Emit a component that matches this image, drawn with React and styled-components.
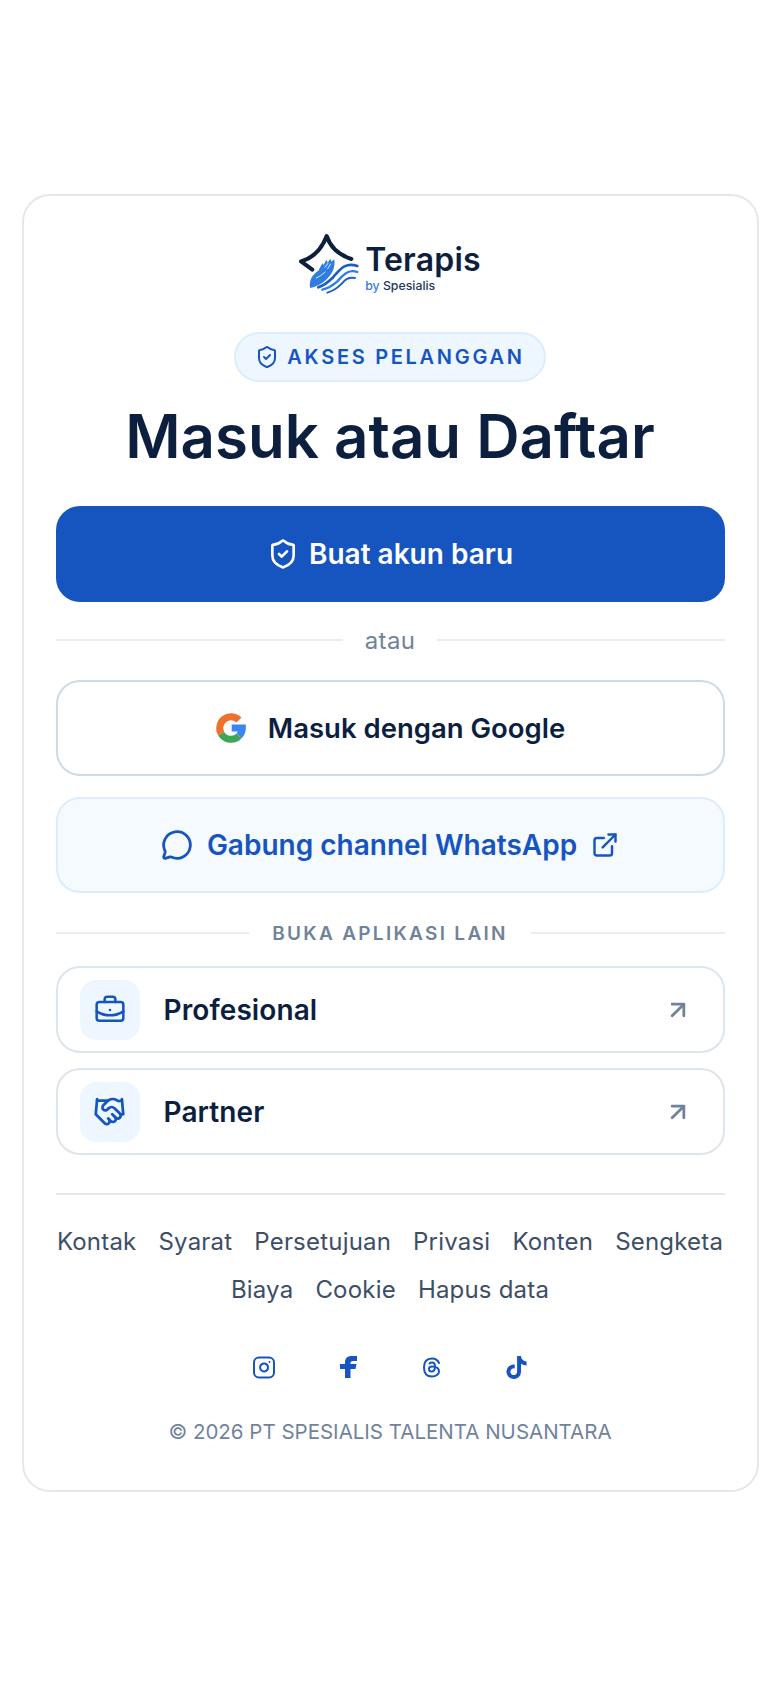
import React from 'react';
import styled, { createGlobalStyle } from 'styled-components';
import {
  ShieldCheck, MessageCircle, ExternalLink, BriefcaseBusiness,
  Handshake, ArrowUpRight, Instagram,
} from 'lucide-react';
import { FaTiktok } from 'react-icons/fa';
import { TbBrandThreads } from 'react-icons/tb';

const Global = createGlobalStyle`
  html, body { margin: 0; padding: 0; background: #fff; }
  body { font-family: Inter, "Open Sans", sans-serif; color: #0d1f3f; }
  a { text-decoration: none; color: inherit; }
`;

const Page = styled.main`
  width: 780px;
  height: 1688px;
  padding-top: 194px;
  display: flex;
  align-items: flex-start;
  justify-content: center;
  box-sizing: border-box;
`;

const Card = styled.section`
  width: 737px;
  height: 1298px;
  box-sizing: border-box;
  padding: 36px 32px 0;
  border: 2px solid #e2e8ee;
  border-radius: 28px;
  display: flex;
  flex-direction: column;
  align-items: stretch;
`;

const Brand = styled.div`
  display: flex;
  justify-content: center;
  gap: 6px;
  height: 64px;
  padding-top: 2px;
  box-sizing: border-box;
`;

const BrandText = styled.div`
  display: flex;
  flex-direction: column;
  padding-top: 7px;
`;

const BrandName = styled.span`
  font-size: 32px;
  line-height: 37px;
  font-weight: 600;
  letter-spacing: 0.2px;
  color: #0d1f3f;
`;

const BrandSub = styled.span`
  font-size: 12.3px;
  line-height: 16px;
  font-weight: 500;
  color: #243a5e;
  b { font-weight: 500; color: #2f7de1; }
`;

const Badge = styled.div`
  align-self: center;
  margin-top: 36px;
  height: 50px;
  box-sizing: border-box;
  padding: 0 19px;
  display: flex;
  align-items: center;
  gap: 8px;
  background: #eef6ff;
  border: 2px solid #dcedfd;
  border-radius: 25px;
  color: #1655c0;
  font-size: 20px;
  font-weight: 600;
  letter-spacing: 2.7px;
`;

const Title = styled.h1`
  margin: 18px 0 0;
  text-align: center;
  font-size: 60px;
  line-height: 72px;
  font-weight: 600;
  color: #0d1f3f;
`;

const Button = styled.a`
  height: 96px;
  box-sizing: border-box;
  border-radius: 24px;
  display: flex;
  align-items: center;
  justify-content: center;
  font-weight: 600;
`;

const PrimaryButton = styled(Button)`
  margin-top: 34px;
  gap: 10px;
  font-size: 28px;
  background: #1655c0;
  color: #fff;
`;

const GoogleButton = styled(Button)`
  gap: 21px;
  font-size: 27.5px;
  background: #fff;
  border: 2px solid #cfdae4;
  color: #0d1f3f;
`;

const ChannelButton = styled(Button)`
  margin-top: 21px;
  gap: 14px;
  font-size: 28px;
  background: #f5faff;
  border: 2px solid #dcedfd;
  color: #1655c0;
`;

const Divider = styled.div`
  display: flex;
  align-items: center;
  gap: ${(p) => p.$gap}px;
  margin: ${(p) => p.$margin};
  height: 32px;
  color: #71839b;
  &::before, &::after {
    content: '';
    flex: 1;
    height: 2px;
    background: #e8edf2;
  }
`;

const DividerWord = styled.span`
  font-size: 24px;
  font-weight: 400;
  letter-spacing: 0.3px;
`;

const DividerLabel = styled.span`
  font-size: 19px;
  font-weight: 600;
  letter-spacing: 2.3px;
`;

const AppList = styled.div`
  display: flex;
  flex-direction: column;
  gap: 15px;
`;

const AppRow = styled.a`
  height: 87px;
  box-sizing: border-box;
  border: 2px solid #dde5ec;
  border-radius: 24px;
  padding: 0 31px 0 22px;
  display: flex;
  align-items: center;
  gap: 24px;
  font-size: 28px;
  font-weight: 600;
  letter-spacing: 0.1px;
  color: #0d1f3f;
  & > span { flex: 1; }
`;

const AppIcon = styled.div`
  width: 60px;
  height: 60px;
  border-radius: 16px;
  background: #eef6ff;
  display: flex;
  align-items: center;
  justify-content: center;
  color: #1655c0;
`;

const Rule = styled.hr`
  margin: 38px 0 0;
  border: 0;
  height: 2px;
  background: #e2e8ee;
`;

const Links = styled.nav`
  margin-top: 23px;
  display: flex;
  flex-wrap: wrap;
  justify-content: center;
  column-gap: 22px;
  font-size: 24px;
  line-height: 48px;
  letter-spacing: 0.2px;
  color: #3d4e66;
`;

const Socials = styled.div`
  margin-top: 41px;
  display: flex;
  justify-content: center;
  gap: 60px;
  color: #1655c0;
`;

const SocialSlot = styled.a`
  width: 24px;
  height: 24px;
  display: flex;
  align-items: center;
  justify-content: center;
`;

const Copy = styled.p`
  margin: 37px 0 0;
  text-align: center;
  font-size: 20.5px;
  line-height: 32px;
  color: #71839b;
`;

const Logo = () => (
  <svg width="60" height="60" viewBox="30 28 180 180" fill="none">
    <path d="M70 135 L36 110 Q90 95 113 34 Q130 85 187 103" stroke="#0d1f3f" strokeWidth="12" strokeLinejoin="round" strokeLinecap="round" />
    <path d="M63 190 C60 165 70 150 88 138 L100 116 L104 121 L112 105 L116 114 L124 102 L127 111 L136 104 C140 130 127 152 110 167 C96 179 80 188 63 190 Z" fill="#2f7de1" />
    <path d="M108 128 L117 116 M116 132 L125 118 M82 160 C92 155 100 150 108 142" stroke="#fff" strokeWidth="2.5" strokeLinecap="round" />
    <path d="M205 124 C165 110 150 140 130 160 C118 172 105 182 88 188" stroke="#1c5ec8" strokeWidth="8" strokeLinecap="round" />
    <path d="M205 142 C175 132 160 155 145 170 C133 181 120 190 100 195" stroke="#2f7de1" strokeWidth="7" strokeLinecap="round" />
    <path d="M198 160 C175 155 165 170 155 180 C145 190 135 198 115 204" stroke="#1c5ec8" strokeWidth="6" strokeLinecap="round" />
  </svg>
);

const GoogleIcon = () => (
  <svg width="32" height="32" viewBox="0 0 48 48" fill="none" strokeWidth="10.5">
    <path stroke="#f0712c" d="M36 12 A17 17 0 0 0 9.3 32.5" />
    <path stroke="#3ea655" d="M9.3 32.5 A17 17 0 0 0 36 36" />
    <path stroke="#3b87f0" d="M36 36 A17 17 0 0 0 41 24 H25" />
  </svg>
);

const FacebookIcon = () => (
  <svg width="17" height="22" viewBox="0 0 17 22" fill="currentColor">
    <path d="M5 22 V13 H0 V8 H5 V6 C5 2 8 0 11.5 0 H17 V5 H13 C11.5 5 10.5 6 10.5 7 V8 H16.5 L15.5 13 H10.5 V22 Z" />
  </svg>
);

const footerLinks = ['Kontak', 'Syarat', 'Persetujuan', 'Privasi', 'Konten', 'Sengketa', 'Biaya', 'Cookie', 'Hapus data'];

export default function App() {
  return (
    <Page>
      <Global />
      <Card>
        <Brand>
          <Logo />
          <BrandText>
            <BrandName>Terapis</BrandName>
            <BrandSub><b>by</b> Spesialis</BrandSub>
          </BrandText>
        </Brand>
        <Badge>
          <ShieldCheck size={24} strokeWidth={2} />
          AKSES PELANGGAN
        </Badge>
        <Title>Masuk atau Daftar</Title>
        <PrimaryButton>
          <ShieldCheck size={32} strokeWidth={2} />
          Buat akun baru
        </PrimaryButton>
        <Divider $gap={22} $margin="22px 0 24px">
          <DividerWord>atau</DividerWord>
        </Divider>
        <GoogleButton>
          <GoogleIcon />
          Masuk dengan Google
        </GoogleButton>
        <ChannelButton>
          <MessageCircle size={32} strokeWidth={2.1} />
          Gabung channel WhatsApp
          <ExternalLink size={28} strokeWidth={2.1} />
        </ChannelButton>
        <Divider $gap={23} $margin="24px 0 17px">
          <DividerLabel>BUKA APLIKASI LAIN</DividerLabel>
        </Divider>
        <AppList>
          <AppRow>
            <AppIcon><BriefcaseBusiness size={32} strokeWidth={1.9} /></AppIcon>
            <span>Profesional</span>
            <ArrowUpRight size={28} color="#71839b" strokeWidth={2.4} />
          </AppRow>
          <AppRow>
            <AppIcon><Handshake size={33} strokeWidth={2} /></AppIcon>
            <span>Partner</span>
            <ArrowUpRight size={28} color="#71839b" strokeWidth={2.4} />
          </AppRow>
        </AppList>
        <Rule />
        <Links>
          {footerLinks.map((l) => <a key={l}>{l}</a>)}
        </Links>
        <Socials>
          <SocialSlot><Instagram size={27} strokeWidth={2} /></SocialSlot>
          <SocialSlot><FacebookIcon /></SocialSlot>
          <SocialSlot><TbBrandThreads size={25} strokeWidth={2} /></SocialSlot>
          <SocialSlot><FaTiktok size={23} /></SocialSlot>
        </Socials>
        <Copy>© 2026 PT SPESIALIS TALENTA NUSANTARA</Copy>
      </Card>
    </Page>
  );
}
